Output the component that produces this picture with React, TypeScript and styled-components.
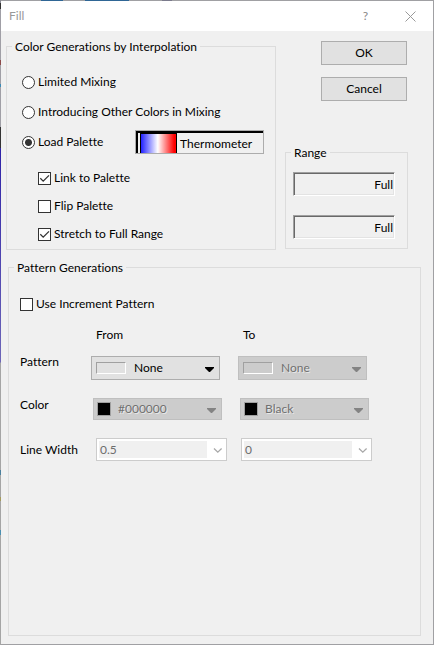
import React, { useState } from "react";
import styled, { createGlobalStyle } from "styled-components";

const GlobalStyle = createGlobalStyle`
  *, *::before, *::after { box-sizing: border-box; }
  body {
    margin: 0;
    background: #a5a5a5;
    color: #000;
    font: 12px/16px Lato, "Open Sans", sans-serif;
    font-variant-ligatures: none;
  }
  button, input, select { font: inherit; font-variant-ligatures: none; color: inherit; margin: 0; }
`;

const Desktop = styled.div`
  min-height: 100vh;
  padding: 1px;
  display: flex;
  background:
    linear-gradient(90deg, transparent 41px, #2f6695 41px 63px, transparent 63px 85px, #2f6695 85px 129px, transparent 129px 162px, #7b7b8c 162px 172px, transparent 172px) top / 100% 1px no-repeat,
    linear-gradient(#8d8d96 0 3px, #333 3px 9px, #a09fa6 9px 60px, #8c4a4a 60px 65px, #a09fa6 65px 84px, #3a8ab5 84px 87px, #a09fa6 87px 127px, #333 127px 148px, #2e22a8 148px, #6d66b8 362px, #a5a5a5 363px 470px, #4a7f9c 470px 475px, #a5a5a5 475px 497px, #a39a5c 497px 501px, #a5a5a5 501px 530px, #4a8fb0 530px 535px, #a5a5a5 535px) left / 1px 100% no-repeat,
    #a0a0a3;
`;

const Dialog = styled.main`
  flex: 1;
  min-width: 0;
  display: flex;
  flex-direction: column;
  background: #f0f0f0;
`;

const TitleBar = styled.header`
  display: flex;
  align-items: center;
  height: 30px;
  padding: 0 0 0 8px;
  background: #fff;
  color: #999;
`;

const Title = styled.h1`
  flex: 1;
  margin: 0;
  font-size: 12px;
  font-weight: 400;
`;

const CaptionButton = styled.button`
  display: grid;
  place-items: center;
  width: 45px;
  height: 28px;
  padding: 0;
  border: 0;
  background: none;
  color: #888;
`;

const Body = styled.form`
  flex: 1;
  display: flex;
  flex-direction: column;
  gap: 10px;
  padding: 8px 12px 8px 5px;
`;

const TopArea = styled.div`
  display: grid;
  grid-template-columns: 1fr 123px;
  gap: 9px;
  padding-right: 13px;
`;

const Group = styled.fieldset`
  min-width: 0;
  margin: 0;
  padding: 0 5px;
  border: 1px solid #dcdcdc;
`;

const Legend = styled.legend`
  height: 15px;
  padding: 0 3px;
  line-height: 15px;
`;

const OptionList = styled.div`
  padding: 13px 6px 0 10px;
`;

const OptionRow = styled.div`
  display: flex;
  align-items: center;
  justify-content: space-between;
  height: 30px;
`;

const CheckList = styled.div`
  display: grid;
  grid-auto-rows: 28px;
  align-items: center;
  padding: 7px 0 1px 26px;
`;

const ChoiceLabel = styled.label`
  display: flex;
  align-items: center;
  gap: 3px;
  white-space: nowrap;
`;

const Radio = styled.input.attrs({ type: "radio" })`
  appearance: none;
  width: 13px;
  height: 13px;
  border: 1px solid #333;
  border-radius: 50%;
  background: #fff;
  &:checked { background: radial-gradient(circle, #333 3px, #fff 4px); }
`;

const CheckBox = styled.input.attrs({ type: "checkbox" })`
  appearance: none;
  width: 13px;
  height: 13px;
  border: 1px solid #333;
  background: #fff;
`;

const CheckHolder = styled.span`
  display: grid;
  > * { grid-area: 1 / 1; }
  > svg { pointer-events: none; }
`;

const PaletteButton = styled.button`
  display: flex;
  align-items: stretch;
  width: 129px;
  height: 24px;
  padding: 0;
  border: 1px solid #acacac;
  background: #f0f0f0;
`;

const PaletteFace = styled.span`
  flex: 1;
  display: flex;
  border-top: 2px solid #000;
  border-left: 2px solid #000;
  padding-left: 2px;
`;

const PaletteRamp = styled.span`
  width: 37px;
  border: solid #000;
  border-width: 1px 1px 0 1px;
  background: linear-gradient(90deg, #2222ff, #fff 48%, #ff0000 95%);
`;

const PaletteName = styled.span`
  padding-left: 3px;
  line-height: 22px;
`;

const SideColumn = styled.div`
  display: flex;
  flex-direction: column;
  justify-content: space-between;
  padding: 2px 0 1px;
`;

const ButtonStack = styled.div`
  display: grid;
  gap: 12px;
  padding: 0 1px 0 36px;
`;

const PushButton = styled.button`
  height: 24px;
  padding: 0;
  border: 1px solid #adadad;
  background: #e1e1e1;
`;

const RangeFields = styled.div`
  display: grid;
  gap: 19px;
  padding: 12px 7px 9px 2px;
`;

const RangeInput = styled.input`
  width: 100%;
  height: 24px;
  padding: 0 1px;
  border: 1px solid;
  border-color: #a0a0a0 #fff #fff #a0a0a0;
  box-shadow: inset 1px 1px #696969, inset -1px -1px #e3e3e3;
  background: #f0f0f0;
  text-align: right;
`;

const PatternGroup = styled(Group)`
  flex: 1;
  margin-left: 2px;
`;

const PatternContent = styled.div`
  padding: 21px 0 0 6px;
`;

const PatternGrid = styled.div`
  display: grid;
  grid-template-columns: 71px 147px 1fr;
  grid-template-rows: 29px 42px 40px 23px;
  padding-top: 15px;
`;

const Cell = styled.div<{ $inset?: number }>`
  padding-left: ${(p) => p.$inset ?? 0}px;
`;

const RowLabel = styled.div<{ $line: number }>`
  line-height: ${(p) => p.$line}px;
  white-space: nowrap;
`;

const ComboBox = styled.div<{ $compact?: boolean; $off?: boolean }>`
  display: flex;
  align-items: center;
  width: 129px;
  height: ${(p) => (p.$compact ? 22 : 24)}px;
  padding: 0 5px 0 ${(p) => (p.$compact ? 3 : 4)}px;
  border: 1px solid ${(p) => (p.$off ? "#bfbfbf" : "#adadad")};
  background: ${(p) => (p.$off ? "#ccc" : "#e1e1e1")};
  color: ${(p) => (p.$off ? "#838383" : "#000")};
  > svg { margin-top: 3px; pointer-events: none; }
`;

const ComboSelect = styled.select<{ $indent: number }>`
  flex: 1;
  min-width: 0;
  height: 20px;
  padding: 0 0 0 ${(p) => p.$indent}px;
  border: 0;
  appearance: none;
  background: none;
  &:disabled { opacity: 1; color: #707070; text-shadow: 1px 1px #e8e8e8; }
`;

const PatternSwatch = styled.span`
  width: 30px;
  height: 12px;
  border: 1px solid;
  border-color: #a0a0a0 #fff #fff #a0a0a0;
`;

const ColorSwatch = styled.span`
  width: 14px;
  height: 14px;
  border: 1px solid #a0a0a0;
  background: #000;
`;

const WidthBox = styled.div`
  display: flex;
  width: 131px;
  height: 23px;
  padding: 2px;
  border: 1px solid #ccc;
  background: #fff;
`;

const WidthInput = styled.input`
  flex: 1;
  min-width: 0;
  height: 17px;
  padding: 0 0 0 1px;
  border: 0;
  background: #f0f0f0;
  &:disabled { color: #6d6d6d; }
`;

const WidthButton = styled.button`
  width: 17px;
  padding: 0;
  border: 0;
  background: none;
  display: grid;
  place-items: center end;
`;

function Check({ label, initial = false }: { label: string; initial?: boolean }) {
  const [on, setOn] = useState(initial);
  return (
    <ChoiceLabel>
      <CheckHolder>
        <CheckBox checked={on} onChange={() => setOn(!on)} />
        {on && (
          <svg width="13" height="13" viewBox="0 0 13 13" fill="none" stroke="#333" strokeWidth="1.3" aria-hidden="true">
            <path d="M2.3 6.3 5.2 9.2 11 3.4" />
          </svg>
        )}
      </CheckHolder>
      {label}
    </ChoiceLabel>
  );
}

function Arrow({ color }: { color: string }) {
  return (
    <svg width="9" height="5" viewBox="0 0 9 5" fill={color} aria-hidden="true">
      <path d="M0 0h9v1L5 5H4L0 1z" />
    </svg>
  );
}

type ComboProps = { label: string; value: string; kind: "pattern" | "color"; disabled?: boolean };

function Combo({ label, value, kind, disabled }: ComboProps) {
  const isColor = kind === "color";
  return (
    <ComboBox $compact={isColor} $off={disabled}>
      {isColor ? <ColorSwatch /> : <PatternSwatch />}
      <ComboSelect aria-label={label} defaultValue={value} disabled={disabled} $indent={isColor ? 7 : 8}>
        <option>{value}</option>
      </ComboSelect>
      <Arrow color={disabled ? "#838383" : "#000"} />
    </ComboBox>
  );
}

function WidthCombo({ label, value }: { label: string; value: string }) {
  return (
    <WidthBox>
      <WidthInput aria-label={label} defaultValue={value} disabled />
      <WidthButton type="button" disabled aria-label={`${label} list`}>
        <svg width="15" height="17" viewBox="0 0 15 17" fill="none" stroke="#a8a8a8" strokeWidth="1.3" aria-hidden="true">
          <path d="M5 7.5 8.8 11.2 12.6 7.5" />
        </svg>
      </WidthButton>
    </WidthBox>
  );
}

const MODES = ["Limited Mixing", "Introducing Other Colors in Mixing", "Load Palette"];

export default function App() {
  const [mode, setMode] = useState("Load Palette");
  return (
    <Desktop>
      <GlobalStyle />
      <Dialog>
        <TitleBar>
          <Title>Fill</Title>
          <CaptionButton type="button" aria-label="Help">?</CaptionButton>
          <CaptionButton type="button" aria-label="Close">
            <svg width="11" height="11" viewBox="0 0 11 11" stroke="#999" strokeWidth="1" aria-hidden="true">
              <path d="M.5.5l10 10M10.5.5l-10 10" />
            </svg>
          </CaptionButton>
        </TitleBar>
        <Body onSubmit={(e) => e.preventDefault()}>
          <TopArea>
            <Group>
              <Legend>Color Generations by Interpolation</Legend>
              <OptionList>
                {MODES.map((name) => (
                  <OptionRow key={name}>
                    <ChoiceLabel>
                      <Radio name="mode" checked={mode === name} onChange={() => setMode(name)} />
                      {name}
                    </ChoiceLabel>
                    {name === "Load Palette" && (
                      <PaletteButton type="button">
                        <PaletteFace>
                          <PaletteRamp />
                          <PaletteName>Thermometer</PaletteName>
                        </PaletteFace>
                      </PaletteButton>
                    )}
                  </OptionRow>
                ))}
              </OptionList>
              <CheckList>
                <Check label="Link to Palette" initial />
                <Check label="Flip Palette" />
                <Check label="Stretch to Full Range" initial />
              </CheckList>
            </Group>
            <SideColumn>
              <ButtonStack>
                <PushButton type="submit">OK</PushButton>
                <PushButton type="button">Cancel</PushButton>
              </ButtonStack>
              <Group>
                <Legend>Range</Legend>
                <RangeFields>
                  <RangeInput aria-label="Range start" defaultValue="Full" />
                  <RangeInput aria-label="Range end" defaultValue="Full" />
                </RangeFields>
              </Group>
            </SideColumn>
          </TopArea>
          <PatternGroup>
            <Legend>Pattern Generations</Legend>
            <PatternContent>
              <Check label="Use Increment Pattern" />
              <PatternGrid>
                <RowLabel $line={16} />
                <Cell $inset={5}>From</Cell>
                <Cell $inset={5}>To</Cell>
                <RowLabel $line={12}>Pattern</RowLabel>
                <Cell><Combo kind="pattern" label="Pattern from" value="None" /></Cell>
                <Cell><Combo kind="pattern" label="Pattern to" value="None" disabled /></Cell>
                <RowLabel $line={14}>Color</RowLabel>
                <Cell $inset={2}><Combo kind="color" label="Color from" value="#000000" disabled /></Cell>
                <Cell $inset={2}><Combo kind="color" label="Color to" value="Black" disabled /></Cell>
                <RowLabel $line={24}>Line Width</RowLabel>
                <Cell $inset={5}><WidthCombo label="Line width from" value="0.5" /></Cell>
                <Cell $inset={3}><WidthCombo label="Line width to" value="0" /></Cell>
              </PatternGrid>
            </PatternContent>
          </PatternGroup>
        </Body>
      </Dialog>
    </Desktop>
  );
}
